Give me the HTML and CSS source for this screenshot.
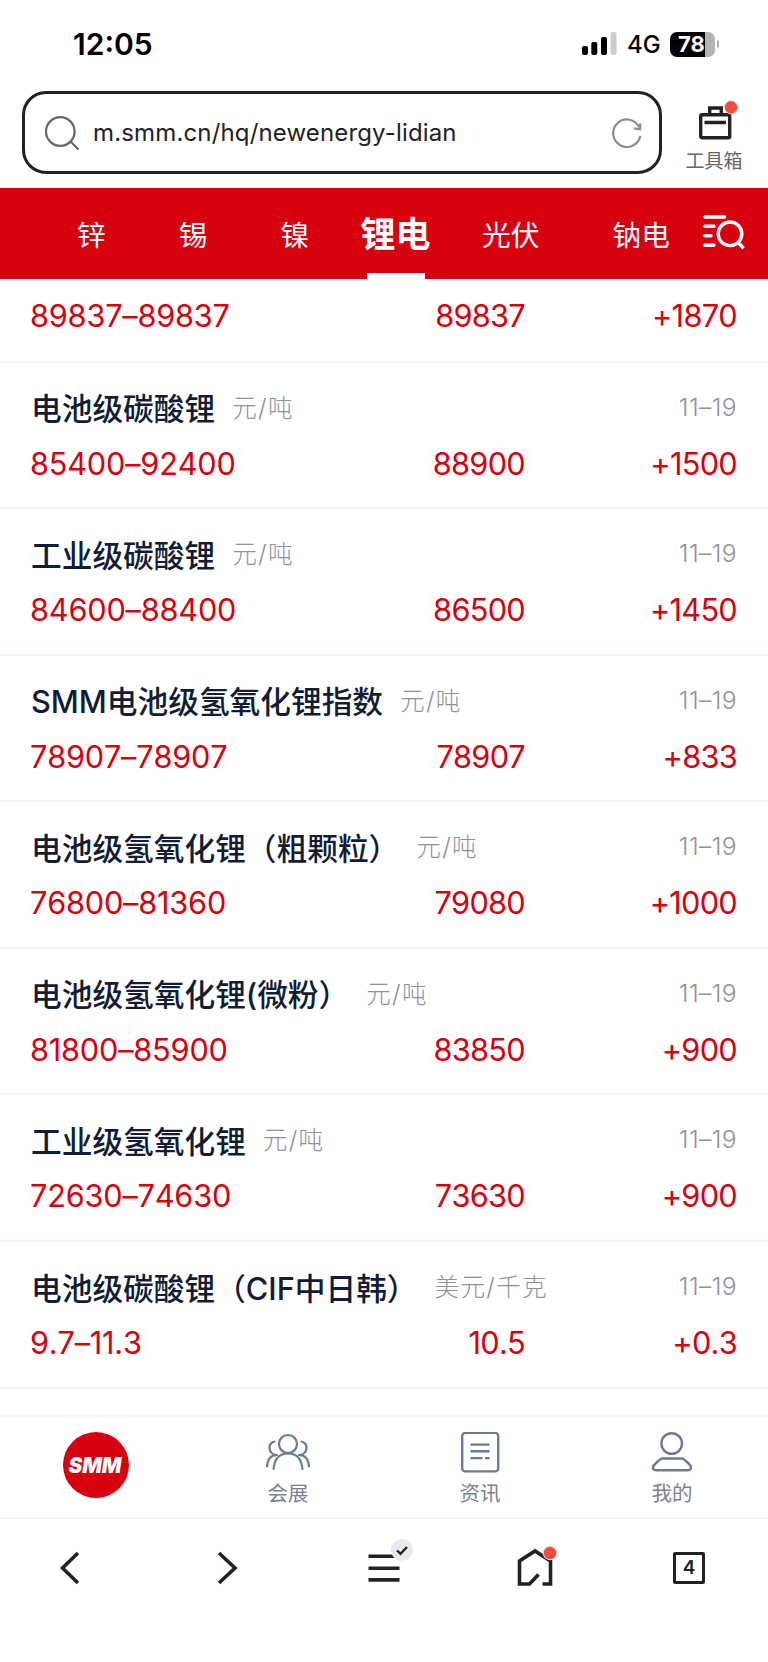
FILE: index.html
```html
<!DOCTYPE html>
<html lang="zh-CN">
	<head>
		<meta charset="UTF-8">
		<title>锂电</title>
		<link rel="stylesheet" href="styles.css">
	</head>
	<body>
		<div class="status">
			<span class="time">12:05</span>
			<svg class="signal" width="36" height="24" viewBox="0 0 36 24">
				<rect x="0" y="14" width="6" height="9" rx="2"/>
				<rect x="9.3" y="10" width="6" height="13" rx="2"/>
				<rect x="19" y="5" width="6" height="18" rx="2"/>
				<rect x="28.6" y="0" width="6" height="23" rx="2" fill="#ccc"/>
			</svg>
			<span class="net">4G</span>
			<div class="battery"><span>78</span></div>
			<i class="nub"></i>
		</div>
		<div class="address">
			<div class="search">
				<svg width="36" height="36" viewBox="0 0 36 36" fill="none" stroke="#666" stroke-width="2.2">
					<circle cx="16.3" cy="16.5" r="14.3"/>
					<path d="M26.5 26.5L34.5 34.5"/>
				</svg>
				<span class="url">m.smm.cn/hq/newenergy-lidian</span>
				<svg width="30" height="30" viewBox="0 0 30 30" fill="none" stroke="#8c8c8c" stroke-width="2.2">
					<path d="M28.3 18A13.7 13.7 0 1 1 27.2 9.2"/>
					<path d="M28.2 5.5V11.3L22 10.4"/>
				</svg>
			</div>
			<div class="tools">
				<svg width="42" height="42" viewBox="0 0 42 42" fill="none" stroke="#222" stroke-width="3.4">
					<rect x="3.7" y="15.7" width="29" height="23" rx="1.5"/>
					<path d="M12.7 15V9H24.3V15M7.5 23.5H29"/>
					<circle cx="34" cy="8.3" r="7" fill="#fde3e0" stroke="none"/>
					<circle cx="34" cy="8.3" r="6.2" fill="#f94b3a" stroke="none"/>
				</svg>
				<span>工具箱</span>
			</div>
		</div>
		<div class="nav">
			<a>锌</a>
			<a>锡</a>
			<a>镍</a>
			<a class="active">锂电</a>
			<a>光伏</a>
			<a>钠电</a>
			<svg width="42" height="36" viewBox="0 0 42 36" fill="none" stroke="#fff" stroke-width="3.4" stroke-linecap="round">
				<path d="M2 3H21.5M2 12.3H11M2 21.8H8M2 31.2H11"/>
				<circle cx="27" cy="19.8" r="11.8"/>
				<path d="M35.3 28.8L39.5 33" stroke-linecap="square"/>
			</svg>
		</div>
		<ul class="list">
			<li class="first">
				<div class="price"><span>89837–89837</span><span>89837</span><span>+1870</span></div>
			</li>
			<li>
				<div class="name"><b>电池级碳酸锂</b><em>元/吨</em><i>11–19</i></div>
				<div class="price"><span>85400–92400</span><span>88900</span><span>+1500</span></div>
			</li>
			<li>
				<div class="name"><b>工业级碳酸锂</b><em>元/吨</em><i>11–19</i></div>
				<div class="price"><span>84600–88400</span><span>86500</span><span>+1450</span></div>
			</li>
			<li>
				<div class="name"><b>SMM电池级氢氧化锂指数</b><em>元/吨</em><i>11–19</i></div>
				<div class="price"><span>78907–78907</span><span>78907</span><span>+833</span></div>
			</li>
			<li>
				<div class="name"><b>电池级氢氧化锂（粗颗粒）</b><em>元/吨</em><i>11–19</i></div>
				<div class="price"><span>76800–81360</span><span>79080</span><span>+1000</span></div>
			</li>
			<li>
				<div class="name"><b>电池级氢氧化锂(微粉）</b><em>元/吨</em><i>11–19</i></div>
				<div class="price"><span>81800–85900</span><span>83850</span><span>+900</span></div>
			</li>
			<li>
				<div class="name"><b>工业级氢氧化锂</b><em>元/吨</em><i>11–19</i></div>
				<div class="price"><span>72630–74630</span><span>73630</span><span>+900</span></div>
			</li>
			<li>
				<div class="name"><b>电池级碳酸锂（CIF中日韩）</b><em>美元/千克</em><i>11–19</i></div>
				<div class="price"><span>9.7–11.3</span><span>10.5</span><span>+0.3</span></div>
			</li>
		</ul>
		<div class="tabbar">
			<a>
				<svg width="66" height="66" viewBox="0 0 66 66">
					<circle cx="33" cy="33" r="33" fill="#d7000f"/>
					<text class="logo" x="5.5" y="41" textLength="53" lengthAdjust="spacingAndGlyphs">SMM</text>
				</svg>
			</a>
			<a>
				<svg width="48" height="44" viewBox="0 0 48 44" fill="none" stroke="#6b7b93" stroke-width="2.2" stroke-linecap="round">
					<circle cx="24" cy="12" r="9"/>
					<path d="M9.6 37C10.5 26 16 21.5 24 21.5S37.5 26 38.4 37"/>
					<path d="M10.5 9.5C3.5 11.5 4 21 11.5 23M13 23C6.5 23 3.5 28 3 34.5"/>
					<path d="M37.5 9.5C44.5 11.5 44 21 36.5 23M35 23C41.5 23 44.5 28 45 34.5"/>
				</svg>
				<span>会展</span>
			</a>
			<a>
				<svg width="48" height="44" viewBox="0 0 48 44" fill="none" stroke="#6b7b93" stroke-width="2.4">
					<rect x="6.2" y="0.9" width="36" height="38.5" rx="3"/>
					<path d="M14.5 12.6H33.5M14.5 19.3H33.5M14.5 26.1H26.5M29 26.1H33.5"/>
				</svg>
				<span>资讯</span>
			</a>
			<a>
				<svg width="48" height="44" viewBox="0 0 48 44" fill="none" stroke="#6b7b93" stroke-width="2.4">
					<circle cx="23.7" cy="11.5" r="10.3"/>
					<path d="M14 26.5H34C35.5 26.5 42.8 33 43 35C43.3 37.3 42 38.2 40 38.2H8C6 38.2 4.5 37.3 5 35C5.5 33 12.5 26.5 14 26.5Z"/>
				</svg>
				<span>我的</span>
			</a>
		</div>
		<div class="toolbar">
			<svg width="60" height="60" viewBox="0 0 60 60"><path d="M38 15L22.5 30L38 45"/></svg>
			<svg width="60" height="60" viewBox="0 0 60 60"><path d="M20 15L36 30L20 45"/></svg>
			<svg width="60" height="60" viewBox="0 0 60 60">
				<path d="M14.5 18.3H45.5M14.5 30.2H45.5M14.5 41.9H45.5"/>
				<circle cx="48" cy="12" r="11" fill="#e9eaef" stroke="none"/>
				<path d="M43 12.5L46.5 15.8L53 9" stroke-width="2.4"/>
			</svg>
			<svg width="60" height="60" viewBox="0 0 60 60">
				<path d="M33.5 36.5L24.5 46H14.5V23L30 13L45.5 23V46H37.5"/>
				<circle cx="45" cy="15" r="7.2" fill="#fde3e0" stroke="none"/>
				<circle cx="45" cy="15" r="6.2" fill="#f94b3a" stroke="none"/>
			</svg>
			<div class="pages">4</div>
		</div>
	</body>
</html>
```
FILE: styles.css
```css
*{
	padding:0px;margin:0px;list-style: none;
	box-sizing: border-box;
}
body{
	width: 768px;
	height: 1662px;
	overflow: hidden;
	background: #fff;
	font-family: Inter,"Noto Sans CJK SC",sans-serif;
}
svg{
	display: block;
	flex: none;
}
b,em,i{
	font-style: normal;
}
.status{
	display: flex;
	align-items: center;
	height: 88px;
	padding-left: 73px;
}
.time{
	width: 509px;
	font-size: 30px;
	font-weight: 600;
}
.net{
	width: 43px;
	margin-left: 9px;
	font-size: 24px;
	font-weight: 500;
}
.battery{
	width: 45px;
	height: 25px;
	border-radius: 7px;
	background: linear-gradient(90deg,#000 35.5px,#b3b3b3 35.5px);
	color: #fff;
	font-size: 22px;
	font-weight: 700;
	line-height: 25px;
	padding-left: 8px;
}
.nub{
	width: 2px;
	height: 8px;
	margin-left: 2px;
	border-radius: 0 2px 2px 0;
	background: #b3b3b3;
}
.address{
	display: flex;
	height: 100px;
	padding: 3px 0 0 22px;
}
.search{
	display: flex;
	align-items: center;
	width: 640px;
	height: 83px;
	padding: 0 17px 0 19px;
	border: 3px solid #222;
	border-radius: 24px;
}
.url{
	flex: 1;
	padding-left: 13px;
	font-size: 24px;
	letter-spacing: 0.15px;
	color: #222;
}
.tools{
	display: flex;
	flex-direction: column;
	align-items: center;
	width: 104px;
	padding-top: 7px;
	font-size: 19px;
	line-height: 24px;
	color: #666;
}
.tools svg{
	margin: 1px -7px 9px 0;
}
.nav{
	display: flex;
	align-items: center;
	height: 91px;
	padding-left: 77px;
	background: #d7000f;
	color: #fff;
	font-size: 28.7px;
}
.nav a{
	height: 91px;
	margin-right: 73px;
	line-height: 95px;
}
.nav .active{
	position: relative;
	margin: 0 51.5px 0 -21.5px;
	font-size: 35px;
	font-weight: 700;
	line-height: 92px;
}
.active::after{
	content: "";
	position: absolute;
	left: 6px;
	bottom: 0px;
	width: 58px;
	height: 6px;
	background: #fff;
}
.nav a:nth-child(6){
	margin-right: 33px;
}
.nav svg{
	margin-top: -4px;
}
.list{
	height: 1136px;
}
.list li{
	height: 146.6px;
	padding: 24px 31px 0 31px;
	border-bottom: 2px solid #f3f6fc;
}
.list .first{
	height: 83.5px;
	padding-top: 17px;
}
.name{
	display: flex;
	align-items: center;
	height: 40px;
	margin-bottom: 17px;
	color: #111c35;
}
.name b{
	font-size: 30.7px;
	font-weight: 500;
}
.name em{
	flex: 1;
	padding: 0 0 2px 17px;
	font-size: 24.6px;
	font-weight: 300;
	letter-spacing: 1.3px;
	color: #8f929d;
}
.name i{
	font-size: 24.6px;
	font-weight: 300;
	font-kerning: none;
	letter-spacing: 0.4px;
	color: #8f929d;
}
.price{
	display: grid;
	grid-template-columns: 294px 200px 212px;
	line-height: 40px;
	font-size: 30.7px;
	font-weight: 380;
	font-kerning: none;
	letter-spacing: -0.7px;
	color: #d7000f;
}
.price span:first-child{
	margin-left: -1px;
	letter-spacing: -0.2px;
}
.price span + span{
	text-align: right;
}
.tabbar{
	display: flex;
	height: 103px;
	border-top: 2px solid #f8f8f8;
}
.tabbar a{
	display: flex;
	flex-direction: column;
	align-items: center;
	width: 192px;
	padding-top: 15px;
	font-size: 20.5px;
	line-height: 30px;
	color: #7b7f95;
}
.tabbar span{
	margin-top: 3px;
}
.logo{
	fill: #fff;
	font-size: 22px;
	font-weight: 900;
	font-style: italic;
}
.toolbar{
	display: flex;
	align-items: center;
	height: 99px;
	padding-left: 40px;
	border-top: 1px solid #f2f2f2;
	fill: none;
	stroke: #222;
	stroke-width: 3.6px;
}
.toolbar svg{
	margin-right: 91px;
	overflow: visible;
}
.toolbar svg:first-child{
	margin-right: 99px;
}
.toolbar svg:nth-child(2){
	margin-right: 95px;
}
.pages{
	width: 32px;
	height: 32px;
	margin-left: 17px;
	border: 3.5px solid #222;
	border-radius: 2px;
	font-size: 19px;
	font-weight: 600;
	line-height: 26px;
	text-align: center;
	color: #222;
}
```
